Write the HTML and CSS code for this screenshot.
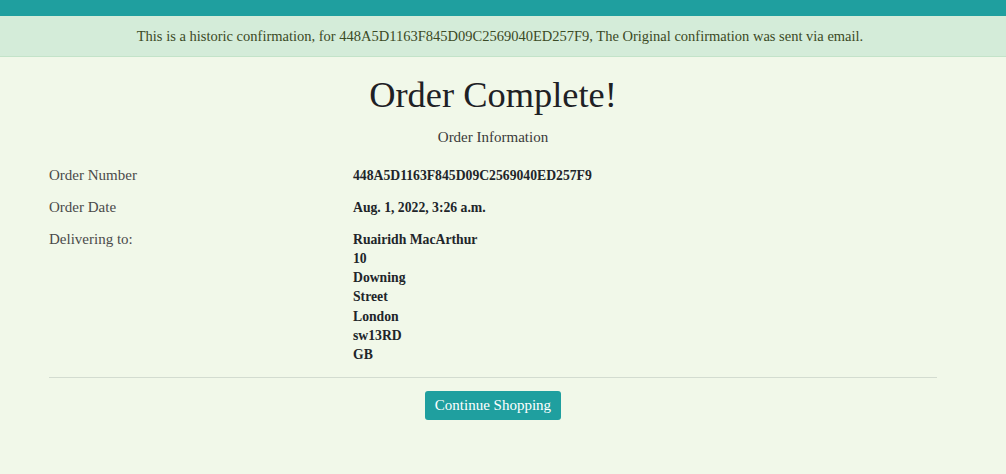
FILE: index.html
```html
<!DOCTYPE html>
<html lang="en">
<head>
<meta charset="utf-8">
<title>Order Complete</title>
<link rel="stylesheet" href="styles.css">
</head>
<body>
<div class="topbar"></div>
<div class="alert">This is a historic confirmation, for 448A5D1163F845D09C2569040ED257F9, The Original confirmation was sent via email.</div>
<main class="content">
  <h1 class="title">Order Complete!</h1>
  <p class="subtitle">Order Information</p>
  <div class="info">
    <div class="label">Order Number</div>
    <div class="value">448A5D1163F845D09C2569040ED257F9</div>
    <div class="label">Order Date</div>
    <div class="value">Aug. 1, 2022, 3:26 a.m.</div>
    <div class="label">Delivering to:</div>
    <div class="value">Ruairidh MacArthur<br>10<br>Downing<br>Street<br>London<br>sw13RD<br>GB</div>
  </div>
  <hr class="divider">
  <div class="actions"><a class="btn" href="#">Continue Shopping</a></div>
</main>
</body>
</html>
```

FILE: styles.css
```css
html, body {
  margin: 0;
  padding: 0;
}
body {
  background: #f1f8e9;
  font-family: "Liberation Serif", "Times New Roman", serif;
  color: #212529;
  height: 474px;
  overflow: hidden;
}
.topbar {
  height: 16px;
  background: #1f9f9f;
}
.alert {
  background: #d4ecd9;
  color: #3b4a25;
  text-align: center;
  font-size: 14.5px;
  height: 41px;
  line-height: 41px;
  border-bottom: 1px solid #c3e3c9;
  box-sizing: border-box;
  padding-right: 6px;
}
.content {
  margin-left: 49px;
  width: 888px;
}
.title {
  font-weight: normal;
  font-size: 36.4px;
  text-align: center;
  margin: 18px 0 0;
  line-height: 40px;
  color: #1e2125;
}
.subtitle {
  text-align: center;
  font-size: 15px;
  margin: 12px 0 0;
  line-height: 20px;
  color: #3a3a3a;
}
.info {
  display: grid;
  grid-template-columns: 304px 1fr;
  row-gap: 12.5px;
  margin-top: 19px;
  line-height: 19.3px;
}
.label {
  font-size: 15px;
  color: #4a4a4a;
}
.value {
  font-size: 13.7px;
  font-weight: bold;
  color: #212529;
}
.divider {
  border: 0;
  border-top: 1px solid #d3dcd0;
  margin: 12px 0 0;
}
.actions {
  display: flex;
  justify-content: center;
  margin-top: 13px;
}
.btn {
  display: inline-block;
  background: #1f9f9f;
  color: #ffffff;
  text-decoration: none;
  font-size: 15px;
  padding: 0 10px;
  height: 29px;
  line-height: 29px;
  border-radius: 3px;
}
```
